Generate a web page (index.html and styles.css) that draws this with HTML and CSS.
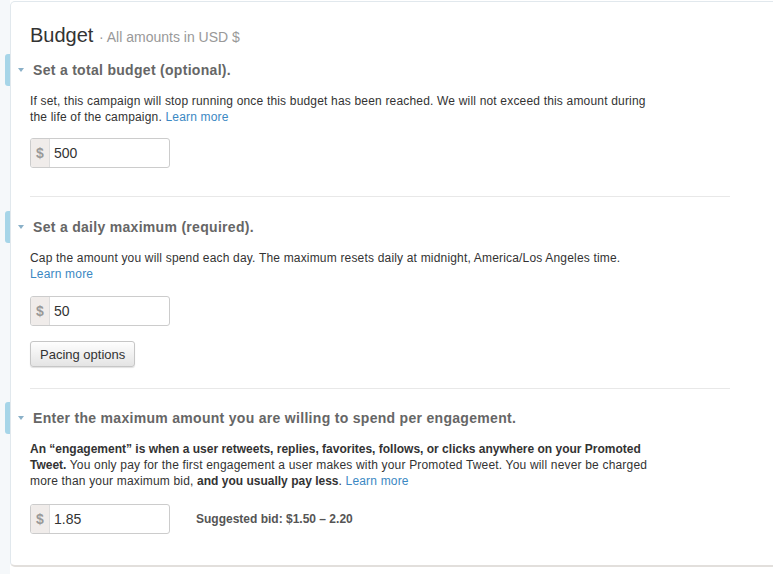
FILE: index.html
```html
<!DOCTYPE html>
<html>
<head>
<meta charset="utf-8">
<link rel="stylesheet" href="styles.css">
</head>
<body>
<div class="page">
  <div class="card">
    <h1 class="title">Budget <span class="sub">· All amounts in USD $</span></h1>

    <section class="section">
      <span class="tab"></span>
      <h2 class="head"><span class="caret"></span>Set a total budget (optional).</h2>
      <p class="desc">If set, this campaign will stop running once this budget has been reached. We will not exceed this amount during the life of the campaign. <a class="link">Learn more</a></p>
      <div class="money money-1"><span class="addon">$</span><span class="val">500</span></div>
    </section>

    <hr class="rule rule-1">

    <section class="section">
      <span class="tab"></span>
      <h2 class="head"><span class="caret"></span>Set a daily maximum (required).</h2>
      <p class="desc">Cap the amount you will spend each day. The maximum resets daily at midnight, America/Los Angeles time. <a class="link">Learn more</a></p>
      <div class="money money-2"><span class="addon">$</span><span class="val">50</span></div>
      <button class="btn">Pacing options</button>
    </section>

    <hr class="rule rule-2">

    <section class="section">
      <span class="tab"></span>
      <h2 class="head"><span class="caret"></span>Enter the maximum amount you are willing to spend per engagement.</h2>
      <p class="desc"><b>An “engagement” is when a user retweets, replies, favorites, follows, or clicks anywhere on your Promoted Tweet.</b> You only pay for the first engagement a user makes with your Promoted Tweet. You will never be charged more than your maximum bid, <b>and you usually pay less</b>. <a class="link">Learn more</a></p>
      <div class="bid-row">
        <div class="money money-3"><span class="addon">$</span><span class="val">1.85</span></div>
        <span class="hint">Suggested bid: $1.50 – 2.20</span>
      </div>
    </section>
  </div>
</div>
</body>
</html>
```

FILE: styles.css
```css
html, body {
  margin: 0;
  padding: 0;
  overflow: hidden;
  width: 773px;
  height: 574px;
}

body {
  font-family: "Liberation Sans", Arial, sans-serif;
  color: #333;
  background: linear-gradient(#f5f8fa, #f5f8fa) left top / 10px 100% no-repeat, #ffffff;
}

.page {
  padding: 1px 0 0 10px;
}

.card {
  width: 800px;
  background: #fff;
  border: 1px solid #e1e8ed;
  border-bottom: 2px solid #e2dfdc;
  border-radius: 5px;
  padding: 21px 0 31px 19px;
  box-sizing: border-box;
}

.title {
  margin: 0 0 11px 0;
  font-size: 20px;
  line-height: 24px;
  font-weight: normal;
  color: #333;
}

.sub {
  font-size: 14px;
  color: #999;
}

.section {
  position: relative;
}

.tab {
  position: absolute;
  left: -25px;
  top: -6px;
  width: 5px;
  height: 32px;
  background: #a6d5e8;
  border-radius: 3px 0 0 3px;
}

.head {
  position: relative;
  margin: 0 0 13px 0;
  padding-left: 3px;
  font-size: 14px;
  line-height: 20px;
  font-weight: bold;
  letter-spacing: 0.3px;
  color: #666;
}

.caret {
  position: absolute;
  left: -12px;
  top: 8px;
  width: 0;
  height: 0;
  border-left: 3px solid transparent;
  border-right: 3px solid transparent;
  border-top: 4px solid #8ab0c8;
}

.desc {
  margin: 0;
  width: 620px;
  font-size: 12px;
  line-height: 16px;
  letter-spacing: 0.18px;
  color: #333;
}

.desc b {
  color: #333;
  letter-spacing: 0;
}

.link {
  color: #3b88c3;
  text-decoration: none;
}

.money {
  display: flex;
  width: 140px;
  height: 30px;
  box-sizing: border-box;
  border: 1px solid #ccc;
  border-radius: 3px;
  background: #fff;
  overflow: hidden;
}

.money-1 {
  margin-top: 13px;
}

.money-2 {
  margin-top: 14px;
}

.money-3 {
  margin-top: 15px;
}

.addon {
  width: 18px;
  background: #f0ecea;
  border-right: 1px solid #ddd;
  color: #999;
  font-weight: bold;
  font-size: 14px;
  line-height: 28px;
  text-align: center;
}

.val {
  padding-left: 4px;
  font-size: 14px;
  line-height: 28px;
  color: #333;
}

.btn {
  display: block;
  margin-top: 15px;
  height: 26px;
  padding: 0 9px;
  font-family: "Liberation Sans", Arial, sans-serif;
  font-size: 13px;
  color: #333;
  background: linear-gradient(#fefefe, #e4e4e4);
  border: 1px solid #c6c6c6;
  border-radius: 3px;
  box-shadow: 0 1px 1px rgba(0, 0, 0, 0.12);
}

.rule {
  width: 700px;
  margin: 0;
  border: 0;
  border-top: 1px solid #e8e8e8;
}

.rule-1 {
  margin-top: 28px;
  margin-bottom: 20px;
}

.rule-2 {
  margin-top: 21px;
  margin-bottom: 19px;
}

.bid-row {
  display: flex;
  align-items: flex-end;
  gap: 26px;
}

.hint {
  font-size: 12px;
  font-weight: bold;
  color: #555;
  line-height: 30px;
}
```
